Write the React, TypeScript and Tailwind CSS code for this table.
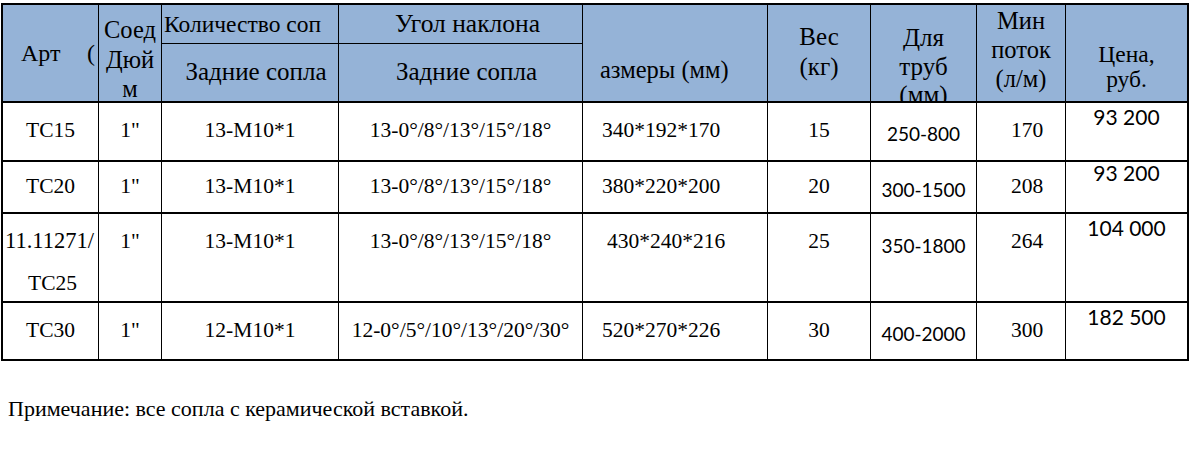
import React from "react";

const serif = "font-['Liberation_Serif','Times_New_Roman',serif]";
const sans = "font-['Lato','Liberation_Sans',sans-serif]";

type Row = {
  art: React.ReactNode;
  conn: string;
  count: string;
  angle: string;
  size: string;
  weight: string;
  pipe: string;
  flow: string;
  price: string;
  main: string;
  pipePad: string;
  pricePad: string;
  sizePad: string;
  last?: boolean;
};

const rows: Row[] = [
  {
    art: "TC15",
    conn: '1"',
    count: "13-M10*1",
    angle: "13-0°/8°/13°/15°/18°",
    size: "340*192*170",
    weight: "15",
    pipe: "250-800",
    flow: "170",
    price: "93 200",
    main: "pt-[13px]",
    pipePad: "pt-[17px]",
    pricePad: "pt-[3px]",
    sizePad: "pl-[19px]",
  },
  {
    art: "TC20",
    conn: '1"',
    count: "13-M10*1",
    angle: "13-0°/8°/13°/15°/18°",
    size: "380*220*200",
    weight: "20",
    pipe: "300-1500",
    flow: "208",
    price: "93 200",
    main: "pt-[10px]",
    pipePad: "pt-[14px]",
    pricePad: "pt-[0px]",
    sizePad: "pl-[19px]",
  },
  {
    art: (
      <>
        <span className="block text-left pl-[2px] whitespace-nowrap text-[22.5px]">11.11271/</span>
        <span className="block mt-[14px] pl-[4px]">TC25</span>
      </>
    ),
    conn: '1"',
    count: "13-M10*1",
    angle: "13-0°/8°/13°/15°/18°",
    size: "430*240*216",
    weight: "25",
    pipe: "350-1800",
    flow: "264",
    price: "104 000",
    main: "pt-[13px]",
    pipePad: "pt-[18px]",
    pricePad: "pt-[3px]",
    sizePad: "pl-[24px]",
  },
  {
    art: "TC30",
    conn: '1"',
    count: "12-M10*1",
    angle: "12-0°/5°/10°/13°/20°/30°",
    size: "520*270*226",
    weight: "30",
    pipe: "400-2000",
    flow: "300",
    price: "182 500",
    main: "pt-[13px]",
    pipePad: "pt-[17px]",
    pricePad: "pt-[3px]",
    sizePad: "pl-[19px]",
    last: true,
  },
];

const head = "bg-[#95b3d7] border-r border-black overflow-hidden";

export default function App() {
  return (
    <div className={`w-[1191px] h-[449px] bg-white text-black ${serif}`}>
      <div className="ml-[1px] pt-[3px]">
        <div className="grid w-[1188px] border-2 border-black grid-cols-[96px_63px_177px_244px_185px_103px_106px_89px_121px] grid-rows-[39px_59px_59px_52px_89px_56px] text-[21.5px] leading-[28px]">
          {/* header */}
          <div className={`${head} row-span-2 border-b-2 flex justify-between pt-[34px] pl-[18px] pr-[3px] text-[24px]`}>
            <span>Арт</span>
            <span>(</span>
          </div>
          <div className={`${head} row-span-2 border-b-2 text-center leading-[29.5px] pt-[10px] text-[24.5px]`}>
            <span className="block">Соед</span>
            <span className="block">Дюй</span>
            <span className="block">м</span>
          </div>
          <div className={`${head} border-b flex items-center pl-[2px] whitespace-nowrap text-[23.5px]`}>
            Количество соп
          </div>
          <div className={`${head} border-b flex items-center justify-center pl-[14px] text-[25.5px]`}>
            Угол наклона
          </div>
          <div className={`${head} row-span-2 border-b-2 pl-[17px] pt-[51px] whitespace-nowrap text-[24.5px]`}>
            азмеры (мм)
          </div>
          <div className={`${head} row-span-2 border-b-2 text-center leading-[30px] pt-[17px] text-[25px]`}>
            <span className="block">Вес</span>
            <span className="block">(кг)</span>
          </div>
          <div className={`${head} row-span-2 border-b-2 text-center leading-[28.5px] pt-[19px] text-[25px]`}>
            <span className="block">Для</span>
            <span className="block">труб</span>
            <span className="block">(мм)</span>
          </div>
          <div className={`${head} row-span-2 border-b-2 text-center leading-[29px] pt-[1px] text-[24.5px]`}>
            <span className="block">Мин</span>
            <span className="block">поток</span>
            <span className="block">(л/м)</span>
          </div>
          <div className="bg-[#95b3d7] row-span-2 border-b-2 border-black overflow-hidden text-center leading-[25px] pt-[37px] text-[23.5px]">
            <span className="block">Цена,</span>
            <span className="block">руб.</span>
          </div>
          <div className={`${head} border-b-2 flex items-center justify-center pl-[12px] pb-[2px] text-[25px]`}>
            Задние сопла
          </div>
          <div className={`${head} border-b-2 flex items-center justify-center pl-[12px] pb-[2px] text-[25px]`}>
            Задние сопла
          </div>

          {/* body */}
          {rows.map((r, i) => {
            const cell = `border-r border-black overflow-hidden ${r.last ? "" : "border-b-2"}`;
            return (
              <React.Fragment key={i}>
                <div className={`${cell} text-center ${r.main}`}>{r.art}</div>
                <div className={`${cell} text-center ${r.main}`}>{r.conn}</div>
                <div className={`${cell} text-center ${r.main}`}>{r.count}</div>
                <div className={`${cell} text-center whitespace-nowrap ${r.main}`}>{r.angle}</div>
                <div className={`${cell} whitespace-nowrap ${r.sizePad} ${r.main}`}>{r.size}</div>
                <div className={`${cell} text-center ${r.main}`}>{r.weight}</div>
                <div className={`${cell} text-center whitespace-nowrap text-[19px] ${sans} ${r.pipePad}`}>{r.pipe}</div>
                <div className={`${cell} text-center pl-[12px] ${r.main}`}>{r.flow}</div>
                <div
                  className={`border-black text-center text-[21px] leading-[22px] ${sans} ${r.pricePad} ${
                    r.last ? "" : "border-b-2"
                  }`}
                >
                  {r.price}
                </div>
              </React.Fragment>
            );
          })}
        </div>
      </div>
      <p className="mt-[35px] pl-[8px] text-[22px] leading-[26px]">
        Примечание: все сопла с керамической вставкой.
      </p>
    </div>
  );
}
